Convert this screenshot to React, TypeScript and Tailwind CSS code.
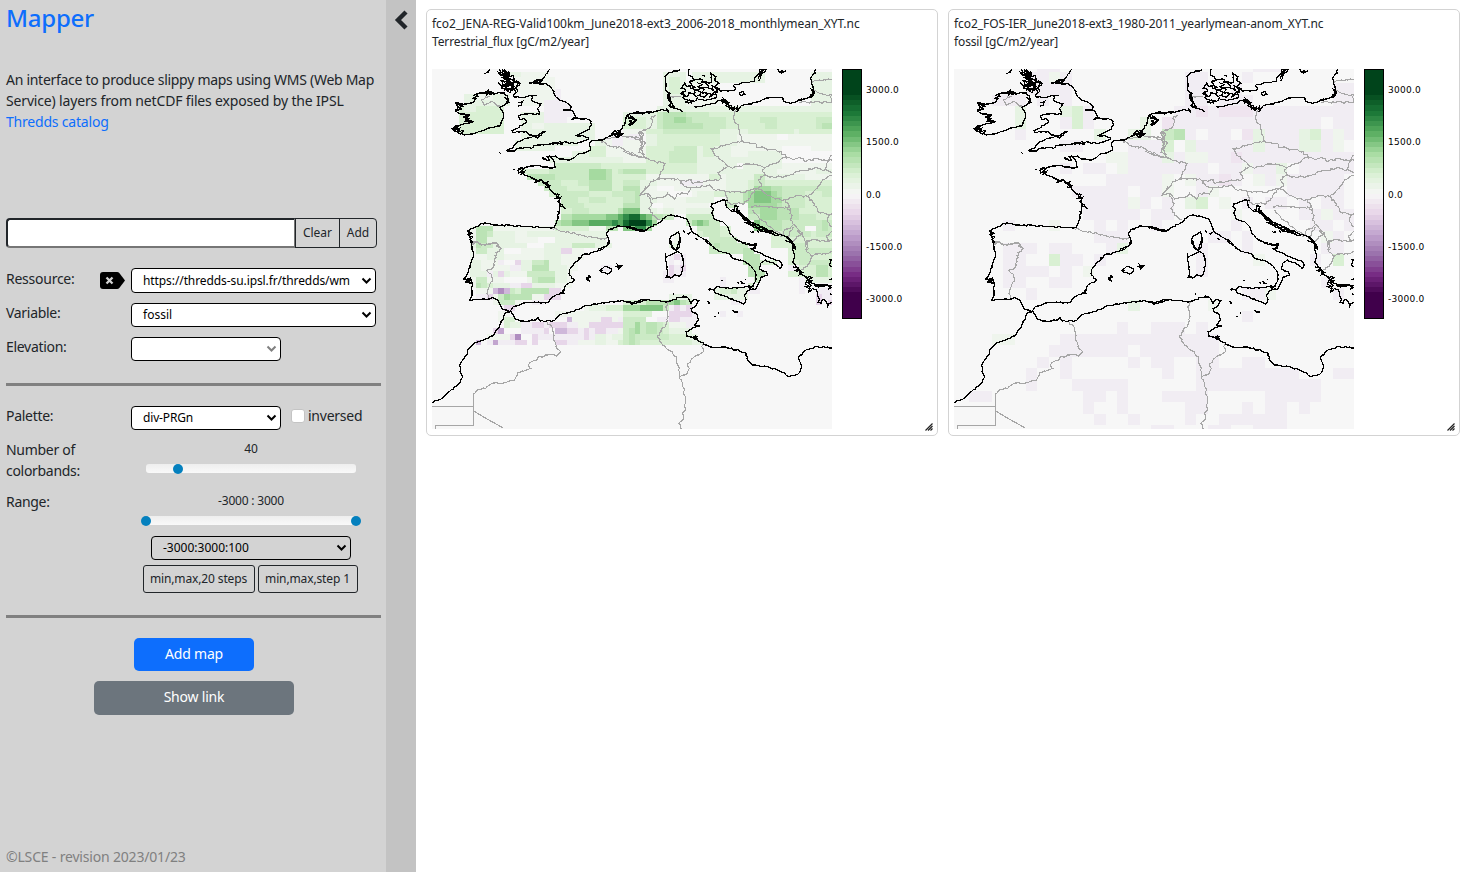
import React from "react";

/* ---------- map geometry: 3 units per pixel, split in four tiles ---------- */
type Tile = { dx: number; dy: number; coast: string[]; border: string[]; flux: string };

const NW: Tile = {
  dx: 0,
  dy: 0,
  coast: [
    "371,27 365,38 357,48 350,57 335,58 322,66 348,62 335,68 308,68 345,72 358,70 370,78 380,90 388,110 400,120 415,125 430,135 436,140 430,150 412,150 440,153 447,165 452,173 437,178 455,176 480,175 495,183 497,195 490,208 475,215 460,222 447,227 470,226 488,232 486,238 470,245 445,250 420,246 390,250 360,254 325,256 315,266 300,262 285,264 270,268 262,275 242,272 262,262 275,245 300,235 320,230 335,234 358,213 340,222 330,228 310,225 300,215 285,215 262,218 257,212 275,205 290,195 302,186 295,175 280,178 278,168 290,163 310,160 340,162 335,145 345,132 328,128 315,120 320,108 333,106 300,110 280,113 262,108 275,95 272,80 282,70 270,62",
    "150,102 175,98 190,95 205,100 235,98 245,112 248,125 235,135 222,142 232,160 230,180 222,198 195,203 170,212 145,220 115,225 100,220 80,207 95,200 115,190 140,185 120,180 130,165 105,162 88,152 98,140 90,130 110,135 130,130 145,125 150,115 140,115 155,108 150,102",
    "82,203 96,196 88,210 102,204 96,216 112,212 104,222 88,212 80,206 98,206 94,220",
    "88,152 108,148 95,142 112,138 92,134 112,130 90,128",
    "118,166 132,164 110,172 128,176 118,184 140,186",
    "176,42 184,36 192,29 182,40 190,32",
    "221,27 228,38 236,30 242,40 222,45 216,36 232,48 248,36 250,48 228,52 240,58 250,50 262,46 266,62 250,56 236,66 224,60 232,74 248,64 258,76 240,80 224,76 216,66 228,84 246,88 236,78 262,66 276,70 270,84 256,82 244,92 252,98 264,88 270,96",
    "230,27 236,34 240,44 232,56 244,52 254,66 238,70 250,72 262,78 258,92 246,84 234,90",
    "228,30 248,42 230,40 246,50 234,58 256,56 240,64 262,72 244,76 266,80 252,90",
    "142,106 158,100 180,96 186,90 182,104 196,96 204,102 170,100",
    "276,128 290,124 286,136 276,138",
    "236,112 248,118 240,130 250,126",
    "660,158 625,158 608,163 600,172 597,188 590,202 578,215 560,225 545,232 525,240 495,243 490,250 494,270 480,278 455,283 440,295 430,300 400,297 388,288 372,290 384,305 388,322 350,322 334,316 320,318 300,322 280,325 276,332 290,340 310,350 330,360 350,362 365,375 370,388 385,400 397,412 402,430 398,460 393,480 385,503 350,503 310,500 260,497 205,495 185,490 165,490 155,500 125,512 130,530 138,545 137,569",
    "612,165 626,176 612,182 620,192 608,194 632,182",
    "556,224 568,212 574,226 584,214 580,228 566,222 592,220 572,232 560,220 580,222 574,210 586,222",
    "276,328 292,326 282,338 296,334 284,346 290,338",
    "320,352 332,362 326,368 346,360 352,370 366,366 360,378 372,376 356,384",
    "384,402 400,404 390,414 404,412 396,424 404,432 418,446 400,436",
    "396,452 402,460 398,456",
    "350,294 362,300 348,292 M360,302 370,300 364,290 372,288",
    "262,328 268,328 M220,278 224,280 M242,272 264,272 250,270",
    "375,250 395,252 380,246 408,252 398,244",
    "660,512 620,507 600,499 575,498 548,510 542,525 550,545 540,560 515,569",
    "124,512 138,520 126,524 140,532 130,540",
  ],
  border: [
    "190,108 165,120 175,135 200,125 215,138 222,138",
    "380,503 400,512 430,518 465,525 500,533 535,537 543,533",
    "135,550 150,545 165,552 180,555 210,548 225,567",
    "525,240 560,232 600,228 635,232 645,245 640,214 660,212",
    "525,240 550,258 590,265 600,278 620,285 640,292 660,294",
    "642,408 655,390 660,380",
    "640,214 654,222 642,236 658,250 644,268 656,284",
  ],
  flux:
    "98,138,232,224c 115,103,250,138b 149,103,200,120a 115,138,149,155b 132,27,132,27a 268,27,371,104a 251,27,285,60b 371,60,388,104a 285,104,388,138a 353,120,422,190p 388,86,405,120p 422,138,440,175p 285,155,353,260b 319,190,388,207a 353,190,500,240b 388,207,440,240b 268,240,388,275b 388,240,450,250b " +
    "500,240,660,275a 507,240,541,275b 558,240,592,257p 558,224,600,240p 490,275,660,292a 371,292,660,309b 490,257,541,300c 440,275,490,292b 388,309,660,343c 388,309,524,326d 285,326,388,343c 371,326,490,360d 490,326,541,360f 541,326,558,360e 558,326,660,343c 558,343,660,360c 575,326,592,343d 302,343,388,360e 336,360,660,378d 353,378,660,395d 422,378,490,395c 405,360,456,378c 490,360,558,395e 490,395,541,412e 558,360,592,395c 371,395,660,412c 388,395,490,412d 405,412,660,447c 405,412,456,430d 490,412,541,430d 558,395,592,412d 592,395,609,447d 592,412,626,447d 626,378,660,447e 405,430,473,447d 405,447,660,465c 439,447,490,465d 575,447,592,465e 592,447,609,465f 609,447,660,465g " +
    "405,465,439,480e 439,465,541,480f 541,465,575,480g 575,465,592,480h 592,465,609,480i 609,465,643,480j 643,465,660,480i 388,480,405,497e 405,480,439,497f 439,480,490,497g 490,480,558,497h 558,480,575,497i 575,480,609,497h 609,480,626,497j 626,480,660,497k 388,497,541,514d 439,497,541,514c 541,497,575,514e 600,497,609,514g 609,497,643,514i 643,497,660,514k " +
    "132,497,540,569a 149,497,200,514e 149,514,183,549e 183,514,200,535d 149,549,166,569f 200,514,268,531b 268,514,336,549a 302,514,353,531b 353,514,541,549b 388,500,490,520c 439,549,515,569d 405,549,422,569q 336,531,388,549n 473,514,507,531b 183,535,268,569b 268,549,353,569c 625,180,660,207d 592,207,660,240a 600,160,660,180c",
};

const NE: Tile = {
  dx: 600,
  dy: 0,
  coast: [
    "162,29 150,33 128,38 117,50 120,70 118,90 130,100 125,115 135,125 132,140 145,145 158,148 172,155",
    "122,92 132,100 124,108 134,114 126,120 138,130 130,136 146,142 134,128 128,102",
    "0,166 20,160 60,157 85,155 110,148 130,157 120,144",
    "4,164 26,158 52,162 30,156 74,158",
    "6,170 20,178 30,178 24,188 10,196 22,188 8,184",
    "190,27 188,45 200,52 205,60 222,56 235,65 250,70 258,60 254,40 270,50 266,62 278,70 268,80 282,92",
    "205,60 190,66 198,76 182,80 176,70 166,84 180,90 164,100 182,110 188,98 204,104 208,90 192,84 210,82 186,76",
    "166,96 178,106 170,112 186,122 176,126 198,130 190,120 206,124 214,112 202,102 210,96",
    "214,66 228,74 216,80 236,88 226,98 244,100 236,112 218,106 224,96 212,90 232,82 248,84 242,70 226,66",
    "238,100 262,104 248,112 266,96 272,110 254,118 232,120 216,118",
    "244,80 262,92 258,76 272,88 282,84 264,98 276,96",
    "205,140 224,140 240,134 265,130 280,122 290,118 288,130 298,122 305,134 316,138 310,148 324,142 322,152 334,140 336,154 345,138 370,132 400,125 420,114 440,112 470,113 474,124 495,130 505,128 530,118 555,108 565,95 558,75 553,55 560,45 568,40 568,27",
    "286,120 300,130 292,116 308,128 300,136 318,150 326,144 338,150 330,156",
    "552,106 562,100 556,88 566,96 558,110 512,124 528,116 508,126",
    "282,92 325,92 330,84 322,76 350,68 385,65 388,50 400,38 418,27",
    "398,58 402,44 410,34 404,50 398,64 M400,30 422,28 408,40",
    "340,97 350,94 356,103 345,106 340,97",
    "456,27 462,38 470,32 464,40 480,32 M228,46 236,48",
    "0,501 25,503 40,511 55,513 75,500 100,487 120,470 135,465 160,470 185,480 192,500 200,518 220,530 245,543 260,560 275,569",
    "0,500 20,506 44,514 62,510",
    "130,538 140,526 157,516 162,535 157,550 150,569 M130,538 135,555 143,569",
    "172,511 176,518 M182,520 194,518 186,524 M208,536 216,538",
    "305,422 290,420 275,426 258,432 255,440 262,448 257,460 265,478 290,485 305,500 312,520 325,535 350,550 378,554 390,552 380,569",
    "300,422 301,440 312,450 322,455 326,438 336,440 335,450 345,462 358,472 375,487 400,498 425,510 450,520 480,530 500,550 508,569",
    "320,446 334,460 330,446 346,468 340,456 356,480 372,484 360,488 384,502 404,508 372,492 350,470 328,454",
    "384,492 410,500 392,504 426,514 400,512 440,522 414,504 450,528 460,524",
    "372,514 384,516 M394,512 400,518 M482,528 496,544 490,536 506,556 508,566",
  ],
  border: [
    "330,150 322,170 325,185 338,200 340,220 350,243",
    "350,243 320,248 290,258 256,267 265,285 285,300 305,318 320,325 340,318 365,312 395,315 418,322 440,312 460,305 480,290 465,275 440,268 425,272 412,262 396,264 390,252 370,247 350,243",
    "480,290 500,298 520,292 540,304 570,295 600,302 617,300",
    "418,322 410,335 425,350 450,352 480,348 505,338 540,330 575,325 595,330 617,337",
    "617,285 605,305 595,330",
    "415,345 398,360 408,375 395,385 420,402 440,412 470,422 490,415 520,407 545,410 560,400 575,380 590,360 617,345",
    "305,320 275,338 285,355 275,362 250,360 220,366 200,370 195,360 165,362",
    "165,362 175,380 190,382 215,383 250,375 262,388 300,395 350,397 395,385",
    "90,165 75,175 80,185 70,205 42,215 50,245 40,275 55,290 75,303 118,310 105,335 95,357",
    "95,357 130,355 165,362",
    "95,357 75,365 60,385 42,405 65,400 80,417 110,412 125,400 145,418 155,400 185,402 195,385",
    "65,400 78,430 68,445 80,465 100,480",
    "0,230 20,232 40,240 50,250 M0,275 30,285 55,293 M40,238 50,262 38,280",
    "300,395 303,420 312,432 355,430 375,405 395,385",
    "375,440 400,438 440,442 485,442 M378,450 400,475 430,500 465,525",
    "485,440 498,465 492,480 505,495 475,510 465,530",
    "480,420 495,450 490,462 M545,410 570,440 575,455 608,465 617,460",
    "610,465 605,485 617,500 M505,495 520,515 540,545 545,569 M505,500 480,535 M540,545 570,540 600,545 617,540 M617,515 600,528 610,545",
    "515,510 530,520 512,530 500,545",
    "558,65 580,60 617,58 M560,92 600,105 617,105 M520,127 617,127 M610,105 617,127 M130,110 165,110",
  ],
  flux:
    "115,27,180,155b 130,60,166,110c 190,27,285,70b 180,70,285,138a 285,27,420,70b 559,27,618,138b 585,104,618,127b 0,155,95,200b 0,172,60,207c 0,207,60,309a 10,215,42,240p 42,224,94,250n 60,207,111,224b 94,140,330,155b 94,155,250,172d 94,172,250,207d 111,172,200,207e 145,172,180,190f 111,155,180,172e 180,190,232,207e 250,155,335,207c 250,172,300,207d 335,138,618,155b 335,155,618,207c 405,172,455,190d 422,190,455,207d 575,172,618,207d 592,190,618,207e 544,155,618,172c " +
    "60,207,310,360c 60,224,94,258b 145,258,215,309d 129,275,180,326d 180,207,284,224d 111,207,180,224d 215,258,335,360b 232,258,265,290c 284,240,335,275b 284,207,618,240b 370,207,500,224c 520,207,618,224c 335,224,618,275a 455,224,490,240n 470,258,558,309n 335,275,470,309b 350,292,470,326b 470,309,618,326a 320,258,370,292a 0,309,77,360c 0,326,60,343e 77,309,94,326b " +
    "60,343,300,412a 80,309,215,326c 166,360,232,378p 94,378,149,395n 120,395,200,412n 249,343,284,360c 60,360,100,378b 300,343,395,395b 232,378,300,412a 335,326,618,360b 455,326,570,343a 530,343,618,378a 370,360,618,395c 390,345,420,378d 390,378,618,412d 405,378,475,412e 300,395,375,430c 250,395,300,412c 350,395,385,430e 370,395,455,430f 385,395,435,430g 390,378,440,395f 440,412,475,430f 370,430,445,447f 475,395,530,430d 544,395,618,447c 300,430,340,447d 370,447,618,480c 370,447,405,480d 405,447,456,497f 385,480,420,514g 370,447,405,465e 456,447,520,480e 456,480,540,514d 520,465,575,497d 575,465,618,480c 405,480,475,514e 440,514,618,569c 475,514,560,530d 575,480,618,530d 592,480,609,514e 500,530,560,569c 592,395,618,412d 445,430,475,447e 475,430,530,447d " +
    "0,360,42,378d 0,378,42,447e 42,360,60,412b 0,395,25,430d 42,412,94,465b 0,447,42,465g 0,465,9,480i 9,465,42,480j 42,465,60,480h 60,465,77,480g 77,465,111,480e 111,465,137,480d 0,480,9,497j 9,480,60,497k 60,480,77,497i 77,480,94,490f 0,497,25,514g 25,497,60,514i 60,497,77,508f " +
    "94,412,250,465a 77,430,111,447n 180,412,215,430b 215,395,265,430b 111,447,145,465b 180,447,257,480b 187,465,257,497d 200,480,250,497f 215,480,232,497g 250,480,284,514d 215,497,284,514d 215,514,310,531c 232,514,284,531d 250,531,340,549d 284,549,370,569d 318,549,353,569e 310,531,335,569d 284,497,310,514c 137,514,165,569a",
};

const SW: Tile = {
  dx: 0,
  dy: 540,
  coast: [
    "137,0 136,15 143,45 132,75 125,100 113,118 124,122 132,114 130,128 140,128 138,140 138,165 132,180 165,178 185,178 200,172 218,185 228,205 250,215 262,200 290,190 330,187 350,188 365,187 380,170 410,158 420,135 445,120 430,105 430,90 445,70 458,58 470,45 500,38 530,28 550,10 548,0",
    "116,116 136,118 120,126 134,130 126,120 138,124",
    "18,487 45,477 75,450 100,430 110,408 102,395 103,370 122,345 125,330 148,308 185,295 205,283 220,260 235,222 255,215 265,235 290,243 330,240 336,233 342,243 380,243 400,225 415,220 440,215 475,198 540,188 575,183 605,184 617,192 640,182 660,178",
    "520,93 530,85 540,79 555,85 557,92 545,102 532,98 518,92 530,92",
    "568,79 586,78 578,86 574,74 586,82",
    "480,112 494,110 486,118 492,124 482,118 490,106",
    "456,54 468,52 460,58 M408,150 414,160 404,156",
  ],
  border: [
    "140,12 155,6 162,14 180,12 205,10 215,12 212,20 228,25 210,38 207,65 195,88 183,92 200,115 190,140 183,160 186,174",
    "365,245 380,265 383,300 390,320 403,335 395,345 365,345 340,350 330,362 312,368 307,378 318,387 275,398 265,420 240,427 195,432 165,448 143,462",
  ],
  flux:
    "132,0,550,30b 132,30,470,66a 132,66,450,100a 132,100,440,150a 149,147,410,180a 200,180,290,197a " +
    "149,0,183,15d 149,15,200,45d 149,0,166,30e 183,30,234,60b 439,0,515,28d 456,0,490,14e 388,15,439,30b 353,30,405,60b 285,62,405,95b 319,78,371,112e 302,95,388,112d 319,62,353,78d 353,66,371,90e 336,112,388,128e 388,78,422,128b 319,112,336,128d 285,128,388,147b 302,100,319,112d 132,60,166,95b 132,95,200,112b 149,112,183,147d 149,130,166,147e 166,130,183,147d 200,95,250,112b 200,128,251,147b 183,128,200,147c 268,112,302,128n 234,112,268,128n 234,62,268,78n 234,27,285,45n 300,14,353,28n " +
    "405,27,439,45q 217,62,234,80p 268,62,285,78q 251,80,285,95p 217,95,234,112q 183,95,200,110p 251,128,319,145p 285,128,319,145q 200,147,217,162r 217,147,234,162t 234,147,251,162r 251,147,268,162d 268,147,285,162c 285,147,370,165e 251,162,319,180e 234,162,251,180f 217,162,234,180d 166,165,200,180q 149,162,183,180p 371,147,405,162q 353,162,405,180q 217,180,268,197d 319,180,353,190p 530,80,550,97p " +
    "234,197,268,215q 217,215,251,250a 234,232,268,265c 251,250,285,265b 200,265,217,282q 217,265,234,282s 183,282,268,299a 251,282,268,299q 268,282,285,299t 149,299,166,317r 183,299,200,317p 200,299,217,317s 217,299,251,317p 251,299,285,317p 268,299,302,317q 285,250,370,265p 285,265,319,282p 319,250,353,265q 302,265,370,282p 319,282,336,317q 336,282,388,299p 353,265,371,282q 371,249,388,265q 388,250,456,317p 388,265,422,282r 388,249,422,265q 422,232,439,249r 439,249,456,265p 422,265,456,282q 388,299,422,317q 388,217,473,232a 439,217,473,250a 456,232,660,317a 473,197,592,232a 490,197,592,215b 524,190,592,200b 541,197,592,215c 456,265,507,299p 473,265,490,282q 490,249,592,265q 507,265,541,282q 524,232,558,249q 473,282,490,299q 541,265,575,282p 575,232,592,249p 558,282,592,299b 507,282,541,317b 575,299,592,317c 592,180,660,317d 592,180,626,195c 609,197,660,213f 643,190,660,213g 609,232,626,317e 592,213,609,250c 626,250,643,282f 643,282,660,317d 626,265,643,317e",
};

const SE: Tile = {
  dx: 600,
  dy: 540,
  coast: [
    "237,0 248,10 262,22 280,35 310,42 320,55 350,62 375,78 388,95 390,118 382,138 368,140 375,148 387,148 400,125 405,112 425,105 422,95 402,88 402,72 418,60 445,70 462,85 469,75 462,65 440,55 400,38 372,26 388,24 390,12 372,16 345,5 330,0",
    "262,148 275,140 310,145 345,142 370,137 376,142 360,160 355,168 360,180 352,192 340,185 325,182 300,170 265,158 262,148",
    "118,40 122,52 132,46 155,34 168,45 172,70 168,95 162,108 145,105 138,112 120,112 125,92 120,65 118,40",
    "130,0 137,20 150,32 160,20 163,0 M132,0 142,26 M122,108 136,114",
    "0,185 10,184 20,192 60,180 100,182 120,186 135,183 160,172 185,172 195,190 205,178 218,182 210,198 195,205 198,215 212,222 217,240 205,255 222,258 210,260 180,275 182,288 205,295 220,305 240,315 265,322 300,321 340,333 360,340 365,362 380,375 420,380 455,390 490,410 515,403 527,380 518,352 540,330 575,320 617,324",
    "202,290 214,288 206,298 214,298 208,286 M168,170 178,172 170,166",
    "478,0 490,5 502,14 500,30 506,50 500,66 515,85 522,98 540,112 552,128 575,135 617,137",
    "500,80 518,84 508,92 524,92 520,104 530,98 514,88",
    "540,110 558,112 544,120 560,122 542,128 556,136 538,140 550,146 548,156 556,148 538,130 548,116",
    "560,144 572,150 575,165 580,180 574,188 585,190 590,178 600,185 605,198 608,190 617,186",
    "564,134 580,142 572,136 592,140 600,134 617,144 M606,148 616,146 M608,60 616,58 610,72 617,82 M608,118 617,116 M612,160 617,166",
    "246,148 264,150 250,146 M286,121 290,122 M334,126 340,130 M344,122 352,130 344,132 M356,118 360,120",
    "320,210 332,214 326,218 336,218 M264,230 270,230 M276,218 279,222 M244,184 252,190 246,188 M141,160 145,163",
  ],
  border: [
    "132,182 120,200 125,220 122,250 105,270 93,288 110,315 150,350 158,390 160,410 175,450 178,490 172,538 158,550 168,567",
    "230,312 232,335 205,350 185,370 188,390 175,405 160,410",
    "546,0 538,10 540,30 557,48 550,70 525,90",
    "557,48 580,40 600,42 617,35 M540,14 550,0",
  ],
  flux:
    "240,0,284,22c 249,0,300,35d 268,10,302,28e 284,0,335,50d 302,14,370,50d 353,30,388,80e 371,40,405,66e 388,40,420,50d 371,66,405,100e 371,100,422,115e 388,112,405,128d 371,128,388,140c 405,60,460,80c 362,140,398,158p 266,140,360,180b 310,142,335,160d 284,142,310,160c 318,180,352,195p 284,115,300,140p 284,215,300,230p 335,215,352,230p " +
    "113,100,145,125p 128,35,180,110p 145,35,162,55q 128,80,145,110q 162,70,180,95q 145,60,162,80n 128,0,162,30b " +
    "490,0,618,110c 508,0,540,66d 525,30,558,80d 558,20,618,44d 558,66,618,84d 575,84,610,104e 490,80,520,98p 525,110,545,160p 545,110,618,135b 565,150,618,180p 575,165,592,190q 600,180,618,195q " +
    "0,180,130,317d 0,180,60,197c 60,180,120,197e 0,197,42,213f 42,197,112,213g 0,213,77,230c 77,213,125,230n 60,230,111,248n 94,230,125,248p 0,230,60,248d 9,250,60,317d 26,250,43,285f 43,265,77,317d 60,250,94,282e 77,282,112,317d 9,265,26,317e 43,300,94,317c 112,250,130,282c " +
    "125,180,145,197f 145,180,162,197g 162,180,180,197e 180,180,197,197d 125,165,190,180b 125,197,197,213p 145,197,162,230q 125,230,162,248q 162,213,197,230q 180,197,197,213q 197,213,215,265p 180,230,197,265p 162,230,180,248p 125,213,145,230q 130,250,180,270a 120,265,200,285b 130,282,197,317c 180,282,215,300b 94,300,197,317c 197,300,232,317b",
};

const TILES = [NW, NE, SW, SE];

const COLORS: Record<string, string> = {
  n: "#f7f7f7", a: "#eff5ed", b: "#e6f3e3", c: "#d9f0d3", d: "#cbeac5", e: "#bbe3b5", f: "#a5daa0",
  g: "#83c683", h: "#57ab60", i: "#2f8a48", j: "#146a30", k: "#00441b",
  p: "#f1edf3", q: "#e7d6e9", r: "#cfb8da", s: "#c2a5cf", t: "#b08dc0", u: "#efe4ef",
};

/* fossil anomaly: one entry per 2° row, runs written start-end + colour */
const FOSSIL = [
  "8-9p 27-29p",
  "7-8p 9a 10p 21-22p 26p",
  "7-10p 21-22p 25p 34-35p",
  "4-6p 8p 10p 21-22p 24-26p 34-35p",
  "6b 10b 11c 12p 20-21p 22u 23p 24-26u 27-35p",
  "6b 10p 11c 12p 17b 19u 20-32p 34-35p",
  "6p 13b 16-17b 19d 20e 21p 23-24p 26u 27b 28-30p 31b 32c 33p 34a 35p",
  "10-11p 16-18p 19c 21b 22p 23-26p 27b 28-30p 31-32b 33p 34a",
  "14-15a 16-18p 19b 20p 21-22a 23-24p 25u 26-35p",
  "10p 12-13p 15a 16-17p 18-19p 20-22p 24-25p 26a 27-28p 29b 31-35p",
  "14-18p 19a 21a 22-23p 24u 25p 27a 28p 29a 30-34p",
  "11-15p 17-18p 19a 22p 23a 30-34p",
  "12-15p 16a 17p 19p 21b 22c 24a 26p 28-29p 31p 33-34p",
  "12-16p 18-19p 25a 31-32p 33a 34-35p",
  "5p 9a 13p 15p 18p 25p 32-33p 35p",
  "13-15p 23-24p 26p 33a 34p",
  "5-7p 9-10p 14p 15b 22p 26p 33-34p",
  "5-6p 9c 10-11p 13p 22p 27a 32p 34c",
  "5-8p 10p 12a 22p",
  "5-6p 9-10p 33p",
  "7p 26-27p 28a 34p",
  "16b 23a",
  "26p",
  "15p 18-20p 22p",
  "4-5a 10-20p 21-23p",
  "9-15p 17-20p 21-23p",
  "8p 10p 16p 18-19p 22-23p 26-27p",
  "7p 10p 19p 22-30p 34-35p",
  "7p 11-15p 22-32p",
  "2-3p 12-13p 15p 19-22p 28-32p",
  "12p 15p 21-22p 26p 28-29p 31p",
  "13p 16p 21p 24-29p",
  "18p 19p 23-24p 27-29p",
];

const edge = (c: number) => (c < 1 ? 0 : Math.min(400, 3.9 + 11.36 * (c - 1)));

function FossilCells() {
  return (
    <g transform="translate(18 27) scale(3)">
      {FOSSIL.flatMap((row, r) =>
        row.split(" ").map((run, i) => {
          const [a, b] = run.slice(0, -1).split("-").map(Number);
          const x0 = edge(a);
          const x1 = edge((b ?? a) + 1);
          const y0 = r === 0 ? 0 : 2.9 + 11.39 * (r - 1);
          const y1 = 2.9 + 11.39 * r;
          return <rect key={`${r}-${i}`} x={Math.round(x0)} y={Math.round(y0)} width={Math.round(x1) - Math.round(x0)} height={Math.round(y1) - Math.round(y0)} fill={COLORS[run.slice(-1)]} />;
        })
      )}
    </g>
  );
}

const snap = (v: number, origin: number, step: number) =>
  Math.round((origin + Math.round((v - origin) / step) * step) / 3) * 3;

function FluxCells() {
  return (
    <g>
      {TILES.flatMap((t, k) =>
        t.flux.split(" ").filter(Boolean).map((cell, i) => {
          const [a, b, c, d] = cell.slice(0, -1).split(",").map(Number);
          const x0 = snap(a + t.dx, 29.7, 17.04);
          const x1 = snap(c + t.dx, 29.7, 17.04);
          const y0 = snap(b + t.dy, 35, 17.1);
          const y1 = snap(d + t.dy, 35, 17.1);
          return <rect key={`${k}-${i}`} x={x0} y={y0} width={Math.max(0, x1 - x0)} height={Math.max(0, y1 - y0)} fill={COLORS[cell.slice(-1)]} />;
        })
      )}
    </g>
  );
}

/* subdivides long segments with a small repeatable offset */
function rough(line: string, amount: number) {
  let seed = 7;
  const rnd = () => {
    seed = (seed * 16807) % 2147483647;
    return seed / 2147483647 - 0.5;
  };
  return line
    .split("M")
    .map((part) => {
      const pts = part.trim().split(" ").map((p) => p.split(",").map(Number));
      let d = `M${pts[0][0]} ${pts[0][1]}`;
      for (let i = 1; i < pts.length; i++) {
        const [x0, y0] = pts[i - 1];
        const [x1, y1] = pts[i];
        const n = Math.max(1, Math.round(Math.hypot(x1 - x0, y1 - y0) / 6));
        for (let j = 1; j < n; j++) {
          const f = j / n;
          d += `L${(x0 + (x1 - x0) * f + rnd() * amount).toFixed(1)} ${(y0 + (y1 - y0) * f + rnd() * amount).toFixed(1)}`;
        }
        d += `L${x1} ${y1}`;
      }
      return d;
    })
    .join("");
}

function MapImage({ kind }: { kind: "flux" | "fossil" }) {
  return (
    <svg width="400" height="360" viewBox="18 27 1200 1080" shapeRendering="crispEdges" className="block shrink-0 bg-[#f7f7f7]">
      {kind === "flux" ? <FluxCells /> : <FossilCells />}
      <g fill="none" stroke="#a6a6a6" strokeWidth="3.4">
        {TILES.map((t, k) => (
          <g key={k} transform={`translate(${t.dx} ${t.dy})`}>
            {t.border.map((l, i) => <path key={i} d={rough(l, 7)} />)}
          </g>
        ))}
        <path d="M143 1002V1096.500H28.500V1107M18 1039.500H143M143 1053L185 1078L230 1103" />
      </g>
      <g fill="none" stroke="#000" strokeWidth="3.9">
        {TILES.map((t, k) => (
          <g key={k} transform={`translate(${t.dx} ${t.dy})`}>
            {t.coast.map((l, i) => <path key={i} d={rough(l, 4)} />)}
          </g>
        ))}
      </g>
    </svg>
  );
}

const STOPS = [
  [0, 68, 27], [27, 120, 55], [90, 174, 97], [166, 219, 160], [217, 240, 211], [247, 247, 247],
  [231, 212, 232], [194, 165, 207], [153, 112, 171], [118, 42, 131], [64, 0, 75],
];
function ramp(t: number) {
  const p = Math.min(9.999, Math.max(0, t * 10));
  const i = Math.floor(p);
  return `rgb(${STOPS[i].map((v, k) => Math.round(v + (STOPS[i + 1][k] - v) * (p - i))).join(",")})`;
}

function ColorBar() {
  return (
    <div className="flex">
      <svg width="20" height="250" shapeRendering="crispEdges" className="block">
        <rect width="20" height="250" fill="#000" />
        <rect x="1" y="1" width="18" height="25" fill={ramp(0)} />
        {Array.from({ length: 38 }, (_, i) => {
          const y = Math.round(26 + i * 5.2);
          return <rect key={i} x="1" y={y} width="18" height={Math.round(26 + (i + 1) * 5.2) - y} fill={ramp((i + 1) / 39)} />;
        })}
        <rect x="1" y="223" width="18" height="26" fill={ramp(1)} />
      </svg>
      <div className="ml-1 mt-[14px] flex h-[223px] flex-col justify-between font-['DejaVu_Sans'] text-[9px] leading-[14px] tracking-[0.25px] text-black">
        {["3000.0", "1500.0", "0.0", "-1500.0", "-3000.0"].map((t) => <span key={t}>{t}</span>)}
      </div>
    </div>
  );
}

function MapCard({ file, label, kind, tracking }: { file: string; label: string; kind: "flux" | "fossil"; tracking: string }) {
  return (
    <article className="relative h-[427px] w-[512px] shrink-0 rounded-[5px] border border-[#d3d3d3] bg-white p-[5px] text-[12px] leading-[18px]">
      <div className={`whitespace-nowrap ${tracking}`}>{file}</div>
      <div className="whitespace-nowrap tracking-[-0.13px]">{label}</div>
      <div className="mt-[18px] flex gap-[10px]">
        <MapImage kind={kind} />
        <ColorBar />
      </div>
      <svg className="absolute bottom-1 right-1" width="8" height="8" viewBox="0 0 8 8" stroke="#222" strokeWidth="1.2">
        <path d="M0.500 7.500L7.500 0.500M3 7.500L7.500 3M5.500 7.500L7.500 5.500" />
      </svg>
    </article>
  );
}

function Select({ text, className, muted = false }: { text: string; className: string; muted?: boolean }) {
  return (
    <div className={`flex items-center justify-between rounded-[4px] border border-black pl-[11px] pr-[3px] text-[12px] text-black ${className}`}>
      <span className="whitespace-nowrap">{text}</span>
      <svg width="11" height="8" viewBox="0 0 11 8" className="shrink-0" fill="none" stroke={muted ? "#808080" : "#000"} strokeWidth="2">
        <path d="M1.500 1.500L5.500 5.500L9.500 1.500" />
      </svg>
    </div>
  );
}

function Slider({ stops }: { stops: string[] }) {
  return (
    <div className="relative h-[9px] w-[210px] shrink-0 rounded-[3px] bg-gradient-to-b from-[#eeeeee] to-[#f9f9f9]">
      {stops.map((s) => <i key={s} className={`absolute top-0 size-[10px] rounded-full bg-[#0480be] ${s}`} />)}
    </div>
  );
}

const label = "-mt-px w-[125px] shrink-0 text-[14px] leading-[21px] tracking-[-0.3px]";

export default function App() {
  return (
    <div className="flex h-[872px] w-[1470px] overflow-hidden bg-white font-['Noto_Sans',sans-serif] text-[#212529]">
      <aside className="flex w-[386px] flex-col bg-[#d3d3d3] pl-[6px] pr-[5px]">
        <h1 className="mt-[3px] h-[31px] text-[24px] font-medium leading-[30px] tracking-[-0.25px] text-[#0d6efd]">Mapper</h1>
        <p className="mt-[35px] h-[63px] whitespace-nowrap text-[14px] leading-[21px] tracking-[-0.28px]">
          An interface to produce slippy maps using WMS (Web Map<br />
          <span className="tracking-[-0.16px]">Service) layers from netCDF files exposed by the IPSL</span><br />
          <a className="tracking-[-0.2px] text-[#0d6efd]">Thredds catalog</a>
        </p>

        <div className="mt-[86px] flex h-[30px] w-[371px] text-[12px]">
          <div className="w-[289px] rounded-l-[4px] border-2 border-r border-[#212529] border-b-[#767676] border-r-[#767676] bg-white" />
          <button className="w-[45px] border border-[#212529]">Clear</button>
          <button className="-ml-px w-[38px] rounded-r-[4px] border border-[#212529]">Add</button>
        </div>

        <div className="mt-5 flex h-[25px]">
          <span className="w-[94px] text-[14px] leading-[21px] tracking-[-0.25px]">Ressource:</span>
          <svg width="25" height="17" viewBox="0 0 25 17" className="mr-[6px] mt-1">
            <path d="M3 0H17Q18.500 0 19.500 1.200L25 8.500L19.500 15.800Q18.500 17 17 17H3Q0 17 0 14V3Q0 0 3 0Z" fill="#000" />
            <path d="M6.500 5.500L12.500 11.500M12.500 5.500L6.500 11.500" stroke="#d3d3d3" strokeWidth="2.300" />
          </svg>
          <Select text="https://thredds-su.ipsl.fr/thredds/wm" className="w-[245px] bg-white tracking-[-0.09px]" />
        </div>
        <div className="mt-[10px] flex h-6">
          <span className={label}>Variable:</span>
          <Select text="fossil" className="w-[245px] bg-white" />
        </div>
        <div className="mt-[10px] flex h-6">
          <span className={label}>Elevation:</span>
          <Select text="" muted className="w-[150px] justify-end bg-white" />
        </div>

        <div className="mt-[22px] h-[3px] bg-[#808080]" />

        <div className="mt-5 flex h-6">
          <span className={label}>Palette:</span>
          <Select text="div-PRGn" className="w-[150px] bg-white tracking-[-0.15px]" />
          <span className="ml-[10px] mt-[3px] size-[14px] rounded-[3px] border border-[#c4c4c4] bg-white" />
          <span className="-mt-px ml-[3px] text-[14px] leading-[21px] tracking-[-0.25px]">inversed</span>
        </div>
        <div className="mt-[10px] flex h-[42px]">
          <span className={label}>Number of<br />colorbands:</span>
          <div className="ml-[15px] w-[210px] text-center text-[12px] leading-[18px] tracking-[-0.2px]">
            <div className="mb-[6px]">40</div>
            <Slider stops={["left-[27px]"]} />
          </div>
        </div>
        <div className="mt-[10px] flex h-[102px]">
          <span className={label}>Range:</span>
          <div className="flex w-[240px] flex-col items-center text-[12px] leading-[18px]">
            <div className="mb-[6px] tracking-[-0.2px]">-3000 : 3000</div>
            <Slider stops={["-left-[5px]", "-right-[5px]"]} />
            <Select text="-3000:3000:100" className="mt-[11px] h-6 w-[200px] shrink-0" />
            <div className="-ml-px mt-[5px] flex gap-[3px] whitespace-nowrap pr-px tracking-[-0.13px]">
              <button className="h-7 w-[112px] rounded-[3px] border border-[#212529] pb-px">min,max,20 steps</button>
              <button className="h-7 w-[100px] rounded-[3px] border border-[#212529] pb-px">min,max,step 1</button>
            </div>
          </div>
        </div>

        <div className="mt-[21px] h-[3px] shrink-0 bg-[#808080]" />
        <button className="ml-32 mt-5 h-[33px] w-[120px] shrink-0 rounded-[5px] bg-[#0d6efd] pb-[3px] text-[14px] tracking-[-0.2px] text-white">Add map</button>
        <button className="ml-[88px] mt-[10px] h-[34px] w-[200px] shrink-0 rounded-[5px] bg-[#6c757d] pb-1 text-[14px] tracking-[-0.2px] text-white">Show link</button>
        <footer className="mb-[5px] mt-auto text-[14px] leading-[21px] tracking-[-0.18px] text-[#808080]">©LSCE - revision 2023/01/23</footer>
      </aside>

      <div className="flex w-[30px] justify-center bg-[#c3c3c3] pt-[10px]">
        <svg width="14" height="20" viewBox="0 0 14 20" fill="none" stroke="#212529" strokeWidth="4.4">
          <path d="M12 2L4 10L12 18" />
        </svg>
      </div>

      <main className="flex items-start gap-[10px] pl-[10px] pt-[9px]">
        <MapCard kind="flux" file="fco2_JENA-REG-Valid100km_June2018-ext3_2006-2018_monthlymean_XYT.nc" label="Terrestrial_flux [gC/m2/year]" tracking="tracking-[-0.035px]" />
        <MapCard kind="fossil" file="fco2_FOS-IER_June2018-ext3_1980-2011_yearlymean-anom_XYT.nc" label="fossil [gC/m2/year]" tracking="tracking-[-0.07px]" />
      </main>
    </div>
  );
}
